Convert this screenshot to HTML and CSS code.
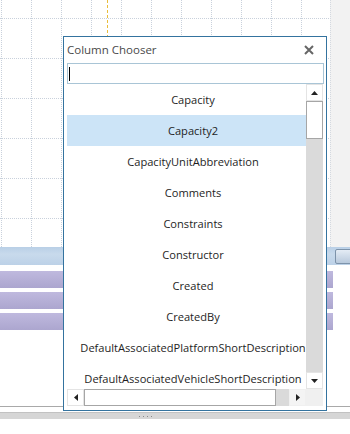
FILE: index.html
```html
<html>
<head>
	<title>Column Chooser</title>
	<meta http-equiv="Content-Type" content="text/html; charset=UTF-8">
	<link rel="stylesheet" href="styles.css">
</head>
<body>
	<div class="workspace">
		<div class="designer">
			<div class="grid"><div class="link-line"></div></div>
			<div class="side-strip"></div>
		</div>
		<div class="band-header"><span class="band-btn"></span></div>
		<div class="band-rows">
			<div class="band-row"></div>
			<div class="band-row"></div>
			<div class="band-row"></div>
		</div>
		<div class="blank"></div>
		<div class="splitter-line"></div>
		<div class="splitter"><span class="grip"></span></div>
		<div class="footer"></div>
	</div>

	<div class="column-chooser">
		<div class="chooser-title">
			<span class="title-text">Column Chooser</span>
			<svg class="close-btn" width="10" height="10" viewBox="0 0 10 10">
				<path d="M1 1 L9 9 M9 1 L1 9" stroke="#666" stroke-width="2" fill="none"/>
			</svg>
		</div>
		<div class="search-box"><span class="caret"></span></div>
		<div class="list-box">
			<div class="list-view">
				<div class="item">Capacity</div>
				<div class="item selected">Capacity2</div>
				<div class="item">CapacityUnitAbbreviation</div>
				<div class="item">Comments</div>
				<div class="item">Constraints</div>
				<div class="item">Constructor</div>
				<div class="item">Created</div>
				<div class="item">CreatedBy</div>
				<div class="item">DefaultAssociatedPlatformShortDescription</div>
				<div class="item">DefaultAssociatedVehicleShortDescription</div>
			</div>
			<div class="vscroll">
				<div class="sb-btn"><svg width="7" height="4" viewBox="0 0 7 4"><path d="M0 4 L3.5 0 L7 4 Z" fill="#222"/></svg></div>
				<div class="vthumb"></div>
				<div class="vtrack"></div>
				<div class="sb-btn"><svg width="7" height="4" viewBox="0 0 7 4"><path d="M0 0 L7 0 L3.5 4 Z" fill="#222"/></svg></div>
			</div>
			<div class="hscroll">
				<div class="sb-btn"><svg width="4" height="7" viewBox="0 0 4 7"><path d="M4 0 L4 7 L0 3.5 Z" fill="#222"/></svg></div>
				<div class="hthumb"></div>
				<div class="htrack"></div>
				<div class="sb-btn plain"><svg width="4" height="7" viewBox="0 0 4 7"><path d="M0 0 L4 3.5 L0 7 Z" fill="#222"/></svg></div>
			</div>
			<div class="corner"></div>
		</div>
	</div>
</body>
</html>
```

FILE: styles.css
```css
	body {
		margin: 0;
		padding: 0;
		width: 350px;
		height: 434px;
		overflow: hidden;
		position: relative;
		background-color: white;
		font-family: "Open Sans", "Noto Sans", sans-serif;
	}

	.workspace {
		display: flex;
		flex-direction: column;
		height: 100%;
	}

	.designer {
		display: flex;
		height: 247px;
	}

	.grid {
		flex: 1;
		position: relative;
		background-color: white;
		background-image:
			conic-gradient(from 270deg at 1px 1px, #c9d1dc 0 90deg, transparent 0),
			conic-gradient(from 270deg at 1px 1px, #c9d1dc 0 90deg, transparent 0);
		background-size: 30px 2px, 2px 40px;
		background-position: 1px 0, 0 18px;
	}

	/* connector from a node above, runs under the dialog */
	.link-line {
		position: absolute;
		left: 107px;
		top: 0;
		width: 1px;
		height: 60px;
		background-image: repeating-linear-gradient(to bottom, #e9bd3c 0 3px, transparent 3px 5px);
	}

	.side-strip {
		width: 19px;
		background-color: #f2f2f2;
		border-left: 1px dotted #d4d9e0;
	}

	.band-header {
		height: 18px;
		display: flex;
		justify-content: flex-end;
		align-items: center;
		background: linear-gradient(to bottom, #b9cfe6, #c8daec 40%, #bcd1e7);
	}

	.band-btn {
		width: 16px;
		height: 13px;
		margin-right: -3px;
		border: 1px solid #7d93aa;
		border-radius: 2px;
		background: linear-gradient(to bottom, #e4ecf5, #b8c9dc);
	}

	.band-rows {
		display: flex;
		flex-direction: column;
		gap: 4px;
		padding-top: 6px;
	}

	.band-row {
		width: 333px;
		height: 17px;
		background: linear-gradient(to bottom, #bfb9de, #aca6cf);
	}

	.blank {
		flex: 1;
	}

	.splitter-line {
		height: 1px;
		background-color: #a9a9a9;
		margin-bottom: 5px;
	}

	.splitter {
		height: 6px;
		display: flex;
		justify-content: center;
		align-items: center;
		background-color: #d6d6d6;
		border-top: 1px solid #c2c2c2;
		padding-right: 58px;
	}

	.grip {
		width: 15px;
		height: 1px;
		background-image: repeating-linear-gradient(to right, #8a8a8a 0 1px, transparent 1px 4px);
	}

	.footer {
		height: 15px;
	}

	/* floating dialog */
	.column-chooser {
		position: absolute;
		left: 63px;
		top: 36px;
		width: 264px;
		height: 375px;
		box-sizing: border-box;
		border: 1px solid #34739f;
		background-color: white;
		padding: 0 2px 4px 3px;
		display: flex;
		flex-direction: column;
	}

	.chooser-title {
		height: 26px;
		display: flex;
		align-items: center;
		justify-content: space-between;
	}

	.title-text {
		font-size: 11.5px;
		color: #4a4a4a;
		margin-top: -1px;
	}

	.close-btn {
		margin-right: 10px;
	}

	.search-box {
		height: 21px;
		box-sizing: border-box;
		border: 1px solid #a9c5d6;
		display: flex;
		align-items: center;
		padding-left: 1px;
	}

	.caret {
		width: 1px;
		height: 14px;
		background-color: black;
	}

	.list-box {
		display: grid;
		grid-template-columns: 239px 17px;
		grid-template-rows: 305px 17px;
		width: 256px;
	}

	.list-view {
		overflow: hidden;
	}

	.item {
		width: 252px;
		height: 31px;
		line-height: 31px;
		text-align: center;
		white-space: nowrap;
		font-size: 11.1px;
		color: #1e1e1e;
	}

	.item.selected {
		background-color: #cce4f7;
	}

	.vscroll {
		display: flex;
		flex-direction: column;
		background-color: #dadada;
	}

	.sb-btn {
		width: 17px;
		height: 17px;
		box-sizing: border-box;
		border: 1px solid #e4e4e4;
		background-color: white;
		display: flex;
		align-items: center;
		justify-content: center;
	}

	.sb-btn.plain {
		border-color: #f0f0f0;
		background-color: #f4f4f4;
	}

	.vthumb {
		height: 38px;
		box-sizing: border-box;
		border: 1px solid #a6a6a6;
		background-color: white;
	}

	.vtrack {
		flex: 1;
	}

	.hscroll {
		display: flex;
		background-color: #dadada;
	}

	.hthumb {
		width: 192px;
		box-sizing: border-box;
		border: 1px solid #a6a6a6;
		background-color: white;
	}

	.htrack {
		flex: 1;
	}

	.corner {
		background-color: #f0f0f0;
	}
```
